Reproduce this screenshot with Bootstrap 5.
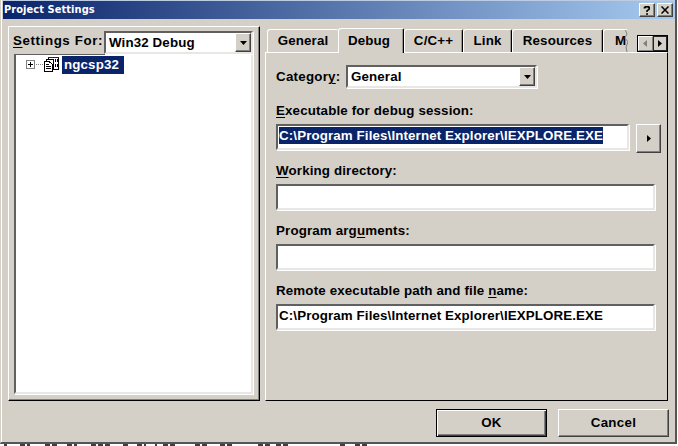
<!DOCTYPE html>
<html lang="en">
<head>
<meta charset="utf-8">
<title>Project Settings</title>
<link href="https://cdn.jsdelivr.net/npm/bootstrap@5.3.0/dist/css/bootstrap.min.css" rel="stylesheet">
<style>
body{width:678px;height:446px;overflow:hidden;background:#fff;color:#000;font:bold 13.33px/16px "Liberation Sans",Arial,sans-serif;letter-spacing:.13px}
.dialog{width:677px;height:444px;background:#d4d0c8;border:1px solid #d4d0c8;border-top:0;border-right:2px solid #555;border-bottom:2px solid #555;box-shadow:inset 1px 0 #fff}
.titlebar{height:19px;margin-left:2px;padding:2px 2px 0 1px;background:linear-gradient(90deg,#0a246a,#a6caf0);color:#fff;border-top:1px solid #bccde3;font:bold 11px/14px "DejaVu Sans Condensed","DejaVu Sans",sans-serif;letter-spacing:.06px}
.raised,.raised:hover{background:#d4d0c8;border:1px solid;border-color:#fff #404040 #404040 #fff;box-shadow:inset -1px -1px #808080;border-radius:0;padding:0;color:#000;display:flex;align-items:center;justify-content:center;flex-shrink:0;font:inherit;letter-spacing:.3px}
.capbtn{width:16px;height:14px}
.capbtn+.capbtn{margin-left:2px}
.main-area{height:382px;padding:7px 0 0 7px}
.leftpane{width:252px;height:375px;border:1px solid;border-color:#fff #000 #000 #fff;box-shadow:inset -1px -1px #808080;padding:4px 6px 0 4px}
.sunk{background:#fff;border:2px solid;border-color:#606060 #e9e7e3 #e9e7e3 #606060;box-shadow:1px 1px #fff;padding:0 2px;white-space:nowrap}
.combo{height:23px;padding:0}
.combo .raised{width:16px;height:19px}
.combo span{line-height:20px;padding-left:3px}
.tree{height:340px;padding:1px 0 0 10px;border-top-width:1px;border-left-width:2px;margin-left:1px}
.picked{background:#0a246a;color:#fff}
.node{height:18px;line-height:17px;width:62px;padding-left:2px;margin-left:1px}
.rightpane{width:403px;margin-left:5px}
.tabstrip{height:26px;padding-left:2px}
.tabitem{height:23px;border-top:1px solid #fff;border-left:1px solid #fff;border-right:1px solid #000;border-radius:3px 2px 0 0;text-align:center;line-height:21px;box-shadow:inset -1px 0 #9a9790;letter-spacing:.15px}
.tabitem.on{height:25px;line-height:23px;background:#d4d0c8;position:relative;margin-bottom:-1px;width:66px;padding-right:4px}
.tab-general{width:71px;border-right:0;box-shadow:none}
.tab-cpp{width:59px}.tab-link{width:49px}.tab-res{width:91px}
.tab-more{width:25px;border-right:0;box-shadow:none;overflow:hidden;text-align:left;padding-left:11px;position:relative}
.tab-more svg{position:absolute;right:-1px;top:-1px}
.spin{width:31px;height:17px;border:1px solid #000;margin:9px 0 0 9px}
.spin span{width:50%;background:#d4d0c8;border:1px solid;border-color:#fff #808080 #808080 #fff;display:flex;align-items:center;justify-content:center}
.page{height:349px;border:1px solid;border-color:#fff #000 #000 #fff;padding:12px 6px 0 10px}
.category{margin-bottom:14px;height:24px}
.category .combo{width:191px}
.fieldlabel{height:16px;margin-bottom:5px;letter-spacing:.15px}
.fieldbox{width:379px;height:26px;line-height:17px;padding:1px 0 0 1px;margin-bottom:13px;letter-spacing:.12px}
.fieldbox span{display:inline-block;height:17px}
.fieldbox.short{width:353px}
.browse{width:25px;height:29px;margin-left:7px}
.rowfix{height:39px}
u{text-underline-offset:2px;text-decoration-thickness:1px}
.footer-row{padding:8px 6px 0 0;gap:11px}
.footer-row .raised{width:111px;height:28px}
.footer-row .okbtn{border-color:#000;box-shadow:inset 1px 1px #fff,inset -1px -1px #404040,inset -2px -2px #808080}
.remains{height:2px;padding-left:2px}
</style>
</head>
<body>
<div class="dialog d-flex flex-column">
 <div class="titlebar d-flex align-items-start flex-shrink-0"><span class="flex-grow-1">Project Settings</span>
  <button class="raised capbtn" aria-label="Help"><svg width="8" height="9" viewBox="0 0 8 9"><path d="M1.5 2.5V1.5H2.5V.8H5.5V1.5H6.2V3.2L4 4.8V6M3 8H5" fill="none" stroke="#000" stroke-width="1.6"/></svg></button>
  <button class="raised capbtn" aria-label="Close"><svg width="8" height="8" viewBox="0 0 8 8"><path d="M.5.5 7.5 7.5M7.5.5.5 7.5" stroke="#000" stroke-width="1.5"/></svg></button>
 </div>
 <div class="main-area d-flex flex-shrink-0">
  <div class="leftpane flex-shrink-0">
   <div class="d-flex"><span style="width:91px;line-height:20px;letter-spacing:.6px"><u>S</u>ettings For:</span>
    <div class="sunk combo d-flex flex-grow-1"><span class="flex-grow-1">Win32 Debug</span><button class="raised" aria-label="Open"><svg width="7" height="4"><path d="M0 0H7L3.5 4Z"/></svg></button></div>
   </div>
   <div class="sunk tree d-flex align-items-start">
    <svg width="35" height="18" viewBox="0 0 35 18" shape-rendering="crispEdges" fill="none" stroke="#000"><path d="M.5 4.5H8.5V12.5H.5Z" stroke="#808080"/><path d="M2 8.5H7M4.5 6V11"/><path d="M10 8.5H18" stroke="#808080" stroke-dasharray="1 1"/><g fill="#fff"><path d="M22.5 1.5H32.5V13.5H22.5Z"/><path d="M20.5 3.5H27.5V13.5H20.5Z"/><path d="M18.5 5.5H23L26.5 8.5V15.5H18.5Z"/></g><path d="M20 8.5H23M20 10.5H25M20 12.5H25M29.5 3V6M31.5 3V6M29.5 8V11M31.5 8V11"/><path d="M22 1.5H33" stroke="#0a246a"/></svg>
    <span class="node picked">ngcsp32</span>
   </div>
  </div>
  <div class="rightpane flex-shrink-0">
   <div class="tabstrip d-flex">
    <div class="d-flex align-items-end">
     <div class="tabitem tab-general">General</div><div class="tabitem on">Debug</div><div class="tabitem tab-cpp">C/C++</div><div class="tabitem tab-link">Link</div><div class="tabitem tab-res">Resources</div>
     <div class="tabitem tab-more">M<svg width="5" height="23"><path d="M1 0 3 5 1 9 4 13 2 18 3 23H5V0Z" fill="#d4d0c8"/><path d="M1 0 3 5 1 9 4 13 2 18 3 23" fill="none" stroke="#808080"/></svg></div>
    </div>
    <div class="spin d-flex"><span><svg width="4" height="7"><path d="M4 0V7L0 3.5Z" fill="#808080"/></svg></span><span class="border-start border-dark"><svg width="4" height="7"><path d="M0 0V7L4 3.5Z"/></svg></span></div>
   </div>
   <div class="page">
    <div class="category d-flex"><span style="width:70px;line-height:24px;letter-spacing:.25px">Categor<u>y</u>:</span>
     <div class="sunk combo d-flex"><span class="flex-grow-1">General</span><button class="raised" aria-label="Open"><svg width="7" height="4"><path d="M0 0H7L3.5 4Z"/></svg></button></div></div>
    <div class="fieldlabel"><u>E</u>xecutable for debug session:</div>
    <div class="d-flex rowfix"><div class="sunk fieldbox short"><span class="picked">C:\Program Files\Internet Explorer\IEXPLORE.EXE</span></div><button class="raised browse" aria-label="Browse"><svg width="4" height="7"><path d="M0 0V7L4 3.5Z"/></svg></button></div>
    <div class="fieldlabel"><u>W</u>orking directory:</div>
    <div class="sunk fieldbox"></div>
    <div class="fieldlabel">Program arg<u>u</u>ments:</div>
    <div class="sunk fieldbox"></div>
    <div class="fieldlabel">Remote executable path and file <u>n</u>ame:</div>
    <div class="sunk fieldbox"><span>C:\Program Files\Internet Explorer\IEXPLORE.EXE</span></div>
   </div>
  </div>
 </div>
 <div class="footer-row d-flex justify-content-end"><button class="raised okbtn">OK</button><button class="raised">Cancel</button></div>
</div>
<svg class="remains d-block" width="380" height="2"><path d="M2 1H5M18 1H28M43 1H55M65 1H75M89 1H108M121 1H126M135 1H144M154 0V2M161 1H174M193 1H206M218 1H231M256 1H270M274 1H286M338 1H344M353 1H365" stroke="#000" stroke-width="1.5" stroke-dasharray="5 2"/></svg>
<script src="https://cdn.jsdelivr.net/npm/bootstrap@5.3.0/dist/js/bootstrap.bundle.min.js"></script>
</body>
</html>
